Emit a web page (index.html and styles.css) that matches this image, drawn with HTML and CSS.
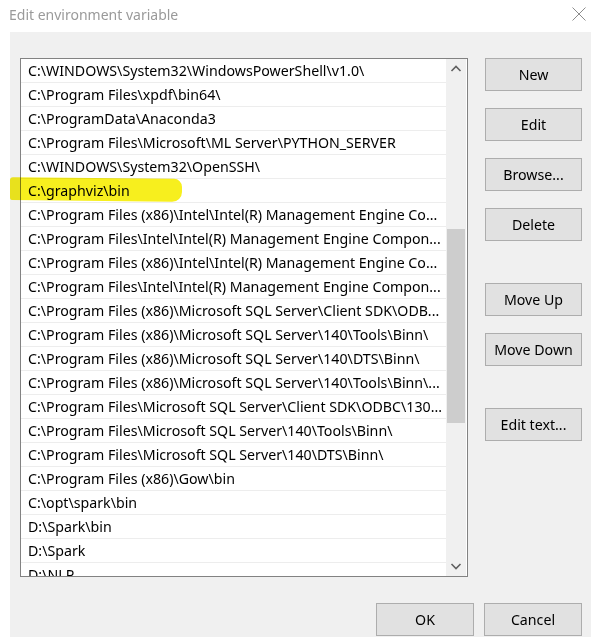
FILE: index.html
```html
<!DOCTYPE html>
<html>
<head>
<meta charset="utf-8">
<link rel="stylesheet" href="styles.css">
</head>
<body>
<div class="titlebar">
  <span class="title">Edit environment variable</span>
  <svg class="close" width="14" height="14" viewBox="0 0 14 14"><path d="M0.5 0.5 L13.5 13.5 M13.5 0.5 L0.5 13.5" stroke="#8c8c8c" stroke-width="1" fill="none"/></svg>
</div>
<div class="panel">
  <div class="main">
    <div class="listbox">
      <ul class="rows">
        <li>C:\WINDOWS\System32\WindowsPowerShell\v1.0\</li>
        <li>C:\Program Files\xpdf\bin64\</li>
        <li>C:\ProgramData\Anaconda3</li>
        <li>C:\Program Files\Microsoft\ML Server\PYTHON_SERVER</li>
        <li>C:\WINDOWS\System32\OpenSSH\</li>
        <li>C:\graphviz\bin</li>
        <li>C:\Program Files (x86)\Intel\Intel(R) Management Engine Co...</li>
        <li>C:\Program Files\Intel\Intel(R) Management Engine Compon...</li>
        <li>C:\Program Files (x86)\Intel\Intel(R) Management Engine Co...</li>
        <li>C:\Program Files\Intel\Intel(R) Management Engine Compon...</li>
        <li>C:\Program Files (x86)\Microsoft SQL Server\Client SDK\ODB...</li>
        <li>C:\Program Files (x86)\Microsoft SQL Server\140\Tools\Binn\</li>
        <li>C:\Program Files (x86)\Microsoft SQL Server\140\DTS\Binn\</li>
        <li>C:\Program Files (x86)\Microsoft SQL Server\140\Tools\Binn\...</li>
        <li>C:\Program Files\Microsoft SQL Server\Client SDK\ODBC\130...</li>
        <li>C:\Program Files\Microsoft SQL Server\140\Tools\Binn\</li>
        <li>C:\Program Files\Microsoft SQL Server\140\DTS\Binn\</li>
        <li>C:\Program Files (x86)\Gow\bin</li>
        <li>C:\opt\spark\bin</li>
        <li>D:\Spark\bin</li>
        <li>D:\Spark</li>
        <li>D:\NLP</li>
      </ul>
      <div class="scrollbar">
        <svg class="arrow" width="20" height="20" viewBox="0 0 20 20"><path d="M5.5 12 L10 7.5 L14.5 12" stroke="#606060" stroke-width="1.6" fill="none"/></svg>
        <div class="track">
          <div class="thumb"></div>
        </div>
        <svg class="arrow" width="20" height="20" viewBox="0 0 20 20"><path d="M5.5 8 L10 12.5 L14.5 8" stroke="#606060" stroke-width="1.6" fill="none"/></svg>
      </div>
    </div>
    <div class="side">
      <div class="group">
        <button class="btn">New</button>
        <button class="btn">Edit</button>
        <button class="btn">Browse...</button>
        <button class="btn">Delete</button>
      </div>
      <div class="group">
        <button class="btn">Move Up</button>
        <button class="btn">Move Down</button>
      </div>
      <div class="group">
        <button class="btn">Edit text...</button>
      </div>
    </div>
  </div>
  <div class="footer">
    <button class="btn">OK</button>
    <button class="btn">Cancel</button>
  </div>
  <div class="marker"></div>
</div>
</body>
</html>
```

FILE: styles.css
```css
html, body {
  margin: 0;
  padding: 0;
  background: #ffffff;
  width: 591px;
  height: 637px;
  overflow: hidden;
  font-family: "Noto Sans", "Open Sans", "Liberation Sans", sans-serif;
}

.titlebar {
  height: 32px;
  display: flex;
  align-items: center;
  justify-content: space-between;
  padding: 0 5px 4px 9px;
  box-sizing: border-box;
}

.title {
  font-size: 14px;
  color: #9a9a9a;
}

.close {
  display: block;
}

.panel {
  position: relative;
  margin-left: 10px;
  height: 605px;
  background: #f0f0f0;
  padding: 26px 9px 0 10px;
  box-sizing: border-box;
}

.main {
  display: flex;
  gap: 17px;
}

.listbox {
  width: 448px;
  height: 519px;
  box-sizing: border-box;
  border: 1px solid #828282;
  background: #ffffff;
  display: flex;
  overflow: hidden;
}

.rows {
  list-style: none;
  margin: 0;
  padding: 0;
  width: 425px;
  overflow: hidden;
}

.rows li {
  height: 24px;
  box-sizing: border-box;
  border-bottom: 1px solid #ededed;
  padding-left: 7px;
  font-size: 14.2px;
  line-height: 23px;
  color: #000000;
  white-space: nowrap;
  overflow: hidden;
}

.scrollbar {
  width: 20px;
  background: #f0f0f0;
  display: flex;
  flex-direction: column;
}

.arrow {
  display: block;
  flex: none;
}

.track {
  flex: 1;
  padding-top: 150px;
}

.thumb {
  margin: 0 1px;
  height: 194px;
  background: #cdcdcd;
}

.side {
  width: 97px;
  display: flex;
  flex-direction: column;
  gap: 42px;
}

.group {
  display: flex;
  flex-direction: column;
  gap: 17px;
}

.btn {
  width: 97px;
  height: 33px;
  box-sizing: border-box;
  background: #e1e1e1;
  border: 1px solid #adadad;
  border-radius: 0;
  font-family: "Noto Sans", "Open Sans", "Liberation Sans", sans-serif;
  font-size: 14.2px;
  color: #000000;
  padding: 0;
  margin: 0;
}

.footer {
  display: flex;
  justify-content: flex-end;
  gap: 10px;
  margin-top: 26px;
}

.footer .btn {
  width: 98px;
}

.marker {
  position: absolute;
  left: 0;
  top: 146px;
  width: 172px;
  height: 23px;
  background: #f7ef1e;
  border-radius: 3px 8px 10px 2px;
  mix-blend-mode: multiply;
  transform: skewY(0.6deg);
}
```
